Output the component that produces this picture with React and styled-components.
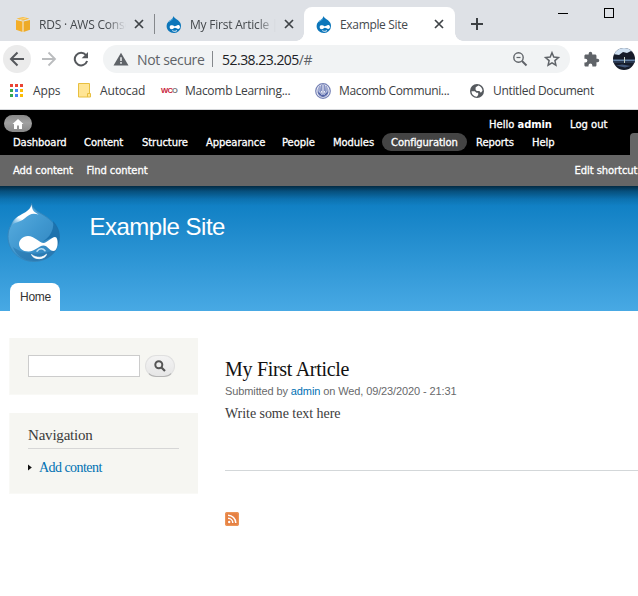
import React from "react";
import styled, { createGlobalStyle } from "styled-components";

const Global = createGlobalStyle`
  * { box-sizing: border-box; }
  html, body { margin: 0; background: #fff; overflow: hidden; }
  svg { display: block; flex: none; }
  a { color: #0071b3; text-decoration: none; }
`;

const Page = styled.div`
  width: 638px;
  height: 596px;
  overflow: hidden;
  background: #fff;
`;

const TabStrip = styled.div`
  height: 41px;
  padding-top: 7px;
  display: flex;
  background: #dee1e6;
  font: 12px "Open Sans", sans-serif;
  color: #45494d;
`;
const Tab = styled.div`
  width: ${(p) => p.$width}px;
  height: 34px;
  flex: none;
  display: flex;
  align-items: center;
  padding-left: ${(p) => p.$pad}px;
  position: relative;
`;
const ActiveTab = styled(Tab)`
  background: #fff;
  border-radius: 8px 8px 0 0;
  &::before, &::after {
    content: "";
    position: absolute;
    bottom: 0;
    width: 8px;
    height: 8px;
  }
  &::before { left: -8px; background: radial-gradient(circle at 0 0, transparent 7.5px, #fff 8px); }
  &::after { right: -8px; background: radial-gradient(circle at 100% 0, transparent 7.5px, #fff 8px); }
`;
const TabTitle = styled.span`
  width: ${(p) => p.$width}px;
  margin: 0 8px;
  overflow: hidden;
  white-space: nowrap;
  letter-spacing: ${(p) => p.$track || 0}px;
  ${(p) => p.$fade && "mask-image: linear-gradient(90deg, #000 78%, transparent);"}
`;
const Divider = styled.span`
  width: 1px;
  height: ${(p) => p.$height || 20}px;
  margin-left: ${(p) => p.$gap || 0}px;
  background: #85888c;
`;
const TabDivider = styled(Divider)`
  margin-top: 7px;
`;
const NewTab = styled.div`
  margin: 10px 0 0 15px;
`;
const WindowButtons = styled.div`
  display: flex;
  gap: 36px;
  margin: 1px 0 0 74px;
`;

const AddressRow = styled.div`
  height: 36px;
  display: flex;
  align-items: center;
  padding-left: 3px;
`;
const RoundButton = styled.div`
  width: 28px;
  height: 28px;
  margin-right: 4px;
  border-radius: 50%;
  display: grid;
  place-items: center;
  background: ${(p) => (p.$lit ? "#ebebeb" : "transparent")};
`;
const Omnibox = styled.div`
  width: 467px;
  height: 28px;
  margin-left: 4px;
  padding: 0 9px 0 10px;
  border-radius: 14px;
  display: flex;
  align-items: center;
  background: #f1f3f4;
  font: 14px "Open Sans", sans-serif;
  color: #5f6368;
`;
const Security = styled.span`
  width: 67px;
  margin-left: 8px;
  white-space: nowrap;
  letter-spacing: -0.35px;
`;
const Url = styled.span`
  margin-left: 9px;
  flex: 1;
  letter-spacing: -0.52px;
  b { font-weight: 400; color: #202124; }
`;
const OmniIcons = styled.div`
  display: flex;
  gap: 14px;
`;
const Extensions = styled.div`
  margin-left: 13px;
`;
const Avatar = styled.div`
  margin-left: 13px;
`;

const Bookmarks = styled.div`
  height: 33px;
  padding: 0 0 5px 9px;
  border-bottom: 1px solid #d5d7da;
  display: flex;
  align-items: center;
  font: 12px "Open Sans", sans-serif;
  color: #3c4043;
`;
const Bookmark = styled.div`
  width: ${(p) => p.$width}px;
  flex: none;
  display: flex;
  align-items: center;
  gap: ${(p) => p.$gap}px;
  white-space: nowrap;
  letter-spacing: ${(p) => p.$track || 0}px;
`;
const Wco = styled.span`
  font: 700 7.5px "Liberation Sans", sans-serif;
  letter-spacing: -0.7px;
  width: 16px;
  color: #c8243b;
  i { font-style: normal; color: #777; }
`;

const AdminBar = styled.div`
  height: 45px;
  padding: 5px 0 0 4px;
  background: #000;
  color: #fff;
  font: 10px "DejaVu Sans", sans-serif;
  -webkit-text-stroke: 0.3px currentColor;
`;
const AdminTop = styled.div`
  height: 18px;
  display: flex;
`;
const HomeButton = styled.div`
  width: 28px;
  height: 17px;
  border-radius: 9px;
  display: grid;
  place-items: center;
  background: linear-gradient(#898989, #a0a0a0 45%, #888);
`;
const UserLinks = styled.div`
  margin: 4px 0 0 457px;
  display: flex;
  white-space: nowrap;
  span { width: 81px; }
  b { letter-spacing: -0.15px; -webkit-text-stroke: 0; }
`;
const AdminMenu = styled.div`
  height: 22px;
  display: flex;
  align-items: flex-start;
`;
const MenuItem = styled.span`
  width: ${(p) => p.$width}px;
  height: 18px;
  line-height: 20px;
  padding-left: 9px;
  border-radius: 9px;
  flex: none;
  white-space: nowrap;
  letter-spacing: -0.08px;
  background: ${(p) => (p.$active ? "#444" : "none")};
`;
const DrawerToggle = styled.span`
  width: 8px;
  height: 22px;
  margin-left: 65px;
  border-radius: 4px 0 0 0;
  background: #666;
`;
const Shortcuts = styled.div`
  height: 31px;
  padding-left: 13px;
  display: flex;
  align-items: center;
  background: #666;
  color: #fff;
  font: 10px "DejaVu Sans", sans-serif;
  -webkit-text-stroke: 0.3px currentColor;
  white-space: nowrap;
`;
const Shortcut = styled.span`
  flex: none;
  width: ${(p) => p.$width}px;
  letter-spacing: -0.08px;
`;

const Header = styled.header`
  height: 125px;
  display: flex;
  flex-direction: column;
  justify-content: space-between;
  background:
    linear-gradient(rgba(0, 0, 0, 0.65), rgba(0, 0, 0, 0.36) 5px, rgba(0, 0, 0, 0.1) 13px, transparent 20px),
    linear-gradient(#0779bf, #48a9e4);
`;
const Brand = styled.div`
  display: flex;
  padding: 17px 0 0 7px;
`;
const SiteName = styled.h1`
  margin: 10px 0 0 28.5px;
  font: 24px/28px "Liberation Sans", sans-serif;
  letter-spacing: -0.5px;
  color: #fff;
`;
const HomeTab = styled.div`
  width: 50px;
  height: 28px;
  margin-left: 10px;
  padding-left: 10px;
  border-radius: 8px 8px 0 0;
  background: #fff;
  color: #333;
  font: 12px/28px "Liberation Sans", sans-serif;
  letter-spacing: -0.25px;
`;

const Body = styled.main`
  display: grid;
  grid-template-columns: 189px 1fr;
  column-gap: 27px;
  padding: 27px 0 0 9px;
  font-family: "Liberation Serif", serif;
  color: #3b3b3b;
`;
const Sidebar = styled.aside`
  display: flex;
  flex-direction: column;
  gap: 18px;
`;
const Block = styled.section`
  height: ${(p) => p.$height}px;
  padding: ${(p) => p.$top}px 18px 0;
  background: #f6f6f2;
  border: solid #f9f9f6;
  border-width: 0 0 1px 1px;
`;
const SearchForm = styled.div`
  display: flex;
  gap: 5px;
`;
const SearchInput = styled.input`
  width: 112px;
  height: 22px;
  border: 1px solid #ccc;
  background: #fff;
  padding: 0;
`;
const SearchButton = styled.button`
  width: 30px;
  height: 22px;
  padding: 0;
  border: 1px solid #e0e0e0;
  border-bottom-color: #b4b4b4;
  border-radius: 11px;
  display: grid;
  place-items: center;
  background: linear-gradient(#f3f3f3, #e6e6e6);
`;
const BlockTitle = styled.h2`
  width: 151px;
  margin: 0;
  height: 23px;
  border-bottom: 1px solid #d6d6d6;
  font-weight: 400;
  font-size: 15px;
  line-height: 18px;
  letter-spacing: -0.2px;
`;
const NavLink = styled.div`
  margin: 10px 0 0;
  display: flex;
  align-items: center;
  gap: 7px;
  font-size: 14px;
  line-height: 17px;
  letter-spacing: -0.55px;
`;
const Article = styled.article`
  padding-top: 20px;
`;
const ArticleTitle = styled.h2`
  margin: 0;
  font-weight: 400;
  font-size: 20px;
  line-height: 22px;
  letter-spacing: -0.3px;
  color: #111;
`;
const Submitted = styled.div`
  margin-top: 4px;
  font: 11px/14px "Liberation Sans", sans-serif;
  letter-spacing: -0.11px;
  color: #68696b;
`;
const Copy = styled.p`
  margin: 7px 0 0;
  height: 66px;
  border-bottom: 1px solid #d3d7d9;
  font-size: 14px;
  line-height: 18px;
  letter-spacing: -0.05px;
`;
const Feed = styled.div`
  margin-top: 41px;
`;

const Close = () => (
  <svg width="10" height="10" viewBox="0 0 10 10" stroke="#3f4347" strokeWidth="1.7">
    <path d="M1 1l8 8M9 1l-8 8" />
  </svg>
);

const Drop = () => (
  <svg width="16" height="17" viewBox="0 0 16 17">
    <path d="M7.500 0C8 2 10 2.700 12 4.200 14.400 6 15 8 15 10a7 7 0 0 1-7.200 7C4 17 .6 14 .6 10 .6 6.700 3 5 4.800 3.700 6.300 2.700 7.400 1.500 7.500 0z" fill="#0c76ba" />
    <path d="M3 5.700C4 4.500 6 4 7 2.500" stroke="#5cb0e0" fill="none" />
    <path d="M3.700 11.200c0-1.600 1.100-2.200 2.500-1.900 1.400.3 1.900 1 2.700 1 .9 0 2-1.300 3.300-1.300 2 0 2.200 2.700 1 3.600-1.400 1-3-.9-4.300-.9-1.200 0-1.600 1.500-3.100 1.500-1.300 0-2.100-.8-2.100-2z" fill="#fff" />
    <path d="M6.300 14.600c1.500 1 3.500.9 4.700-.1" stroke="#fff" fill="none" strokeWidth=".9" />
  </svg>
);

const Cube = () => (
  <svg width="16" height="15" viewBox="0 0 16 15">
    <path d="M1.500 1.500L8 0l6.500 1.500L8 3.700z" fill="#f7bd45" />
    <path d="M1 3l6.500 1.500V15L1 12.800z" fill="#f4ae28" />
    <path d="M15 3L8.500 4.500V15l6.500-2.200z" fill="#edaa27" />
    <path d="M7.500 4.500h1V15h-1z" fill="#fbd589" />
    <path d="M5 2.500L11 1" stroke="#fbd98c" />
  </svg>
);

const DrupalLogo = () => (
  <svg width="54" height="60" viewBox="0 0 54 60">
    <defs>
      <linearGradient id="skin" x1="0" y1="0" x2="1" y2="1">
        <stop offset="0" stopColor="#5eb1e2" />
        <stop offset=".5" stopColor="#4098d0" />
        <stop offset="1" stopColor="#2d80ba" />
      </linearGradient>
      <linearGradient id="shine" x1=".8" y1="0" x2=".1" y2="1">
        <stop offset="0" stopColor="#fff" />
        <stop offset=".65" stopColor="#fff" />
        <stop offset="1" stopColor="#8cc8eb" stopOpacity=".2" />
      </linearGradient>
    </defs>
    <path d="M24.500 .5c1.500 7 8 8.500 15 13.500C48.500 20.500 52.500 27 52.500 34 52.500 48 41 58.500 27 58.500S1 48 1 33.500C1 24 6 17.500 14 12.500 20 9 23.500 6.500 24.500 .5z" fill="url(#skin)" stroke="#3587bd" strokeWidth="1" />
    <path d="M46 18c8 8 8 18 5 24l-7-7-9 4-6 3C40 38 48 29 46 18z" fill="#176ca8" opacity=".8" />
    <path d="M6 44c10 8 32 9 44 1-3 8-12 13-23 13S9 52 6 44z" fill="#20699f" opacity=".45" />
    <path d="M24.500 1.500c.5 7 4 8 7 10-6-2-9-.5-14 4C12 20 7 19 4 23c2-8 8-10 13-13 4-2 7-5 7.500-8.500z" fill="url(#shine)" />
    <path d="M12 41c0-4 4-8 9-8 6 0 12 7 15.500 7 3.500 0 8-6 11.500-6 4 0 3.500 14-1.500 14-4 0-6-5.500-10-5.500-5 0-8 6-15 6-6 0-9.500-3.500-9.500-7.500z" fill="#fff" />
    <path d="M30 48.200c2.500-3.200 6-3.200 8-.4" stroke="#b9ddf2" strokeWidth="1.500" fill="none" strokeLinecap="round" />
    <path d="M24.500 51.500c5 4 11 3.500 15-.3-1 5.500-13 6.300-15 .3z" fill="#fff" stroke="#fff" strokeWidth=".8" strokeLinejoin="round" />
  </svg>
);

const appColors = ["#ea4335", "#ea4335", "#ea4335", "#34a853", "#4285f4", "#fbbc05", "#34a853", "#4285f4", "#fbbc05"];
const AppsIcon = () => (
  <svg width="15" height="14" viewBox="0 0 15 14" shapeRendering="crispEdges">
    {appColors.map((c, i) => (
      <rect key={i} x={1 + (i % 3) * 5} y={Math.floor(i / 3) * 5} width="3" height="3" fill={c} />
    ))}
  </svg>
);

const FileIcon = () => (
  <svg width="13" height="15" viewBox="0 0 13 15">
    <path d="M.5.5h11v9.500l1 1v3H.5z" fill="#ffe595" stroke="#e8bf3f" />
    <path d="M9.500 14v-3.500h3" fill="none" stroke="#e8bf3f" />
  </svg>
);

const CollegeIcon = () => (
  <svg width="16" height="16" viewBox="0 0 16 16">
    <circle cx="8" cy="8" r="7.300" fill="#eef0f8" stroke="#7581b5" strokeWidth="1.200" />
    <path d="M2.500 8c0-3 1.500-4.500 3-5.500L6 9l2 3 2-3 .500-6.500c1.500 1 3 2.500 3 5.500 0 4-3 6-5.500 6s-5.500-2-5.500-6z" fill="#7d8abd" />
    <path d="M8 1v10M6.500 2v6M9.500 2v6" stroke="#6b79b4" strokeWidth=".8" fill="none" />
    <path d="M2.500 8.500c1 3.500 3.500 3.500 5.500 5.500 2-2 4.500-2 5.500-5.500-1 2-4 1.500-5.500 4-1.500-2.500-4.500-2-5.500-4z" fill="#4d5fa3" />
    <path d="M4 4v4l3 4M12 4v4l-3 4" stroke="#dfe3f3" strokeWidth=".7" fill="none" />
  </svg>
);

const Globe = () => (
  <svg width="14" height="14" viewBox="0 0 14 14">
    <circle cx="7" cy="7" r="7" fill="#55595e" />
    <path d="M1.500 7.200h3.300l1.700 1.500h1.700v2.300l-1.400 1.700C3.700 12.400 1.500 10 1.500 7.200z" fill="#fff" />
    <path d="M5.700 3.200L8.400 1.600c2.300.6 4 2.700 4.100 5.200l-1.600 2-1.600-1.900H6.700L5.500 5.500z" fill="#fff" />
  </svg>
);

const Picture = () => (
  <svg width="22" height="22" viewBox="0 0 22 22">
    <defs><clipPath id="round"><circle cx="11" cy="11" r="11" /></clipPath></defs>
    <g clipPath="url(#round)">
      <path d="M0 0h22v22H0z" fill="#161c2a" />
      <path d="M0 0h22v5l-4-2-4 2-4-1-4 3-6-1z" fill="#cfe0f2" />
      <path d="M0 11.500h22v1.500H0z" fill="#6583a8" />
      <path d="M0 13h22v2H0z" fill="#27364f" />
      <path d="M3 17.500l6-1 9 1.500-6 1.500z" fill="#42577a" />
      <path d="M11.500 9v6" stroke="#c6d1c5" />
    </g>
  </svg>
);

const SubmitArrow = () => (
  <svg width="4" height="7" viewBox="0 0 4 7"><path d="M0 .5l3.800 3L0 6.500z" fill="#111" /></svg>
);

export default function App() {
  return (
    <Page>
      <Global />
      <TabStrip>
        <Tab $width={154} $pad={15}>
          <Cube />
          <TabTitle $width={87} $track={-0.2} $fade>RDS · AWS Console</TabTitle>
          <Close />
        </Tab>
        <TabDivider />
        <Tab $width={149} $pad={11}>
          <Drop />
          <TabTitle $width={86} $track={-0.22} $fade>My First Article | Ex</TabTitle>
          <Close />
        </Tab>
        <ActiveTab $width={151} $pad={12}>
          <Drop />
          <TabTitle $width={86} $track={-0.33}>Example Site</TabTitle>
          <Close />
        </ActiveTab>
        <NewTab>
          <svg width="14" height="14" viewBox="0 0 14 14" stroke="#3c4043" strokeWidth="2"><path d="M7 1v12M1 7h12" /></svg>
        </NewTab>
        <WindowButtons>
          <svg width="10" height="11" shapeRendering="crispEdges"><path d="M0 5.500h10" stroke="#000" /></svg>
          <svg width="10" height="11" shapeRendering="crispEdges"><rect x=".5" y=".5" width="9" height="9" fill="none" stroke="#000" /></svg>
        </WindowButtons>
      </TabStrip>

      <AddressRow>
        <RoundButton $lit>
          <svg width="16" height="16" viewBox="0 0 16 16" fill="none" stroke="#55585c" strokeWidth="2"><path d="M15 8H2M8.500 1.500L2 8l6.500 6.500" /></svg>
        </RoundButton>
        <RoundButton>
          <svg width="16" height="16" viewBox="0 0 16 16" fill="none" stroke="#babcbe" strokeWidth="1.800"><path d="M1 8h13M7.500 1.500L14 8l-6.500 6.500" /></svg>
        </RoundButton>
        <RoundButton>
          <svg width="16" height="16" viewBox="0 0 16 16"><path d="M13 4.100A6.300 6.300 0 1 0 14.100 10" fill="none" stroke="#55585c" strokeWidth="2" /><path d="M15 1v6.300H8.700z" fill="#55585c" /></svg>
        </RoundButton>
        <Omnibox>
          <svg width="16" height="14" viewBox="0 0 16 14"><path d="M8 .7L15.500 13.500H.5z" fill="#5f6368" /><path d="M8 5.200v3.700M8 10.100v1.700" stroke="#f1f3f4" strokeWidth="1.500" /></svg>
          <Security>Not secure</Security>
          <Divider $height={16} $gap={8} />
          <Url><b>52.38.23.205</b>/#</Url>
          <OmniIcons>
            <svg width="18" height="18" viewBox="0 0 18 18" fill="none" stroke="#606469" strokeWidth="1.400"><circle cx="7.500" cy="7.500" r="4.700" /><path d="M11 11l4.500 4.500" strokeWidth="2" /><path d="M5.500 7.500h4" strokeWidth="1.200" /></svg>
            <svg width="18" height="18" viewBox="0 0 18 18" fill="none" stroke="#5f6368" strokeWidth="1.500"><path d="M9 2.800l1.800 4.300 4.600.4-3.500 3.100 1 4.600L9 12.800l-3.900 2.400 1-4.600-3.500-3.100 4.600-.4z" /></svg>
          </OmniIcons>
        </Omnibox>
        <Extensions>
          <svg width="17" height="17" viewBox="0 0 24 24" fill="#5f6368"><path d="M20.500 11H19V7c0-1.100-.9-2-2-2h-4V3.500a2.500 2.500 0 0 0-5 0V5H4c-1.100 0-2 .9-2 2v3.800h1.500a2.700 2.700 0 0 1 0 5.400H2V20c0 1.100.9 2 2 2h3.800v-1.500a2.700 2.700 0 0 1 5.400 0V22H17c1.100 0 2-.9 2-2v-4h1.500a2.500 2.500 0 0 0 0-5z" /></svg>
        </Extensions>
        <Avatar><Picture /></Avatar>
      </AddressRow>

      <Bookmarks>
        <Bookmark $width={69} $gap={9} $track={-0.15}><AppsIcon />Apps</Bookmark>
        <Bookmark $width={83} $gap={9} $track={-0.15}><FileIcon />Autocad</Bookmark>
        <Bookmark $width={154} $gap={8} $track={-0.28}><Wco>WC<i>O</i></Wco>Macomb Learning...</Bookmark>
        <Bookmark $width={155} $gap={8} $track={-0.35}><CollegeIcon />Macomb Communi...</Bookmark>
        <Bookmark $width={150} $gap={9} $track={-0.33}><Globe />Untitled Document</Bookmark>
      </Bookmarks>

      <AdminBar>
        <AdminTop>
          <HomeButton>
            <svg width="12" height="10" viewBox="0 0 12 10"><path d="M6 0l5.500 5H10v5H7V6.500H5V10H2V5H.5z" fill="#fff" /></svg>
          </HomeButton>
          <UserLinks><span>Hello <b>admin</b></span>Log out</UserLinks>
        </AdminTop>
        <AdminMenu>
          <MenuItem $width={71}>Dashboard</MenuItem>
          <MenuItem $width={58}>Content</MenuItem>
          <MenuItem $width={64}>Structure</MenuItem>
          <MenuItem $width={76}>Appearance</MenuItem>
          <MenuItem $width={51}>People</MenuItem>
          <MenuItem $width={58}>Modules</MenuItem>
          <MenuItem $width={85} $active>Configuration</MenuItem>
          <MenuItem $width={56}>Reports</MenuItem>
          <MenuItem $width={42}>Help</MenuItem>
          <DrawerToggle />
        </AdminMenu>
      </AdminBar>
      <Shortcuts>
        <Shortcut $width={73.5}>Add content</Shortcut>
        <Shortcut $width={488}>Find content</Shortcut>
        <Shortcut $width={63}>Edit shortcut</Shortcut>
      </Shortcuts>

      <Header>
        <Brand><DrupalLogo /><SiteName>Example Site</SiteName></Brand>
        <HomeTab>Home</HomeTab>
      </Header>

      <Body>
        <Sidebar>
          <Block $height={57} $top={17}>
            <SearchForm>
              <SearchInput aria-label="Search" />
              <SearchButton aria-label="Search">
                <svg width="12" height="12" viewBox="0 0 12 12" fill="none" stroke="#555"><circle cx="4.800" cy="4.800" r="3.500" strokeWidth="2" /><path d="M7.500 7.500l3.500 3.500" strokeWidth="2.200" /></svg>
              </SearchButton>
            </SearchForm>
          </Block>
          <Block $height={81} $top={13}>
            <BlockTitle>Navigation</BlockTitle>
            <NavLink><SubmitArrow /><a>Add content</a></NavLink>
          </Block>
        </Sidebar>
        <Article>
          <ArticleTitle>My First Article</ArticleTitle>
          <Submitted>Submitted by <a>admin</a> on Wed, 09/23/2020 - 21:31</Submitted>
          <Copy>Write some text here</Copy>
          <Feed>
            <svg width="14" height="14" viewBox="0 0 14 14"><rect width="14" height="14" rx="2" fill="#e58043" /><rect x=".7" y=".7" width="12.600" height="12.600" rx="1.500" fill="none" stroke="#ef9b5d" /><circle cx="4.200" cy="10" r="1.200" fill="#fff" /><path d="M3 6.300a4.800 4.800 0 0 1 4.800 4.800M3 3.300a7.800 7.800 0 0 1 7.800 7.800" fill="none" stroke="#fff" strokeWidth="1.500" /></svg>
          </Feed>
        </Article>
      </Body>
    </Page>
  );
}
